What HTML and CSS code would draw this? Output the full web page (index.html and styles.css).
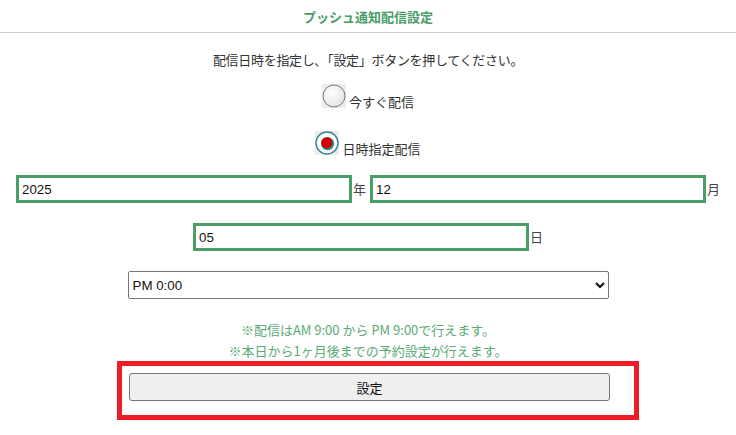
FILE: index.html
```html
<!DOCTYPE html>
<html lang="ja">
<head>
<meta charset="utf-8">
<title>プッシュ通知配信設定</title>
<link rel="stylesheet" href="styles.css">
</head>
<body>
<header class="header"><h1 class="title">プッシュ通知配信設定</h1></header>
<main class="form">
  <p class="instr">配信日時を指定し､「設定」ボタンを押してください。</p>
  <label class="radio-row r1">
    <svg class="radio" width="24" height="24" viewBox="0 0 24 24">
      <defs><radialGradient id="g1" cx="40%" cy="35%" r="70%"><stop offset="0" stop-color="#ffffff"/><stop offset="1" stop-color="#e2e2e2"/></radialGradient></defs>
      <rect width="24" height="24" fill="#ececec"/>
      <circle cx="12" cy="12" r="11" fill="url(#g1)" stroke="#7a7a7a" stroke-width="1"/>
    </svg>
    <span class="rlabel">今すぐ配信</span>
  </label>
  <label class="radio-row r2">
    <svg class="radio" width="24" height="24" viewBox="0 0 24 24">
      <rect width="24" height="24" fill="#ececec"/>
      <circle cx="12" cy="12" r="11" fill="#ffffff" stroke="#2f8595" stroke-width="1.4"/>
      <circle cx="12.6" cy="12.6" r="6.6" fill="#2a8a98"/>
      <circle cx="11.8" cy="11.8" r="5.6" fill="#d40000"/>
    </svg>
    <span class="rlabel">日時指定配信</span>
  </label>
  <div class="date-row">
    <span class="field"><input class="tin" type="text" value="2025"><span class="unit">年</span></span>
    <span class="field"><input class="tin" type="text" value="12"><span class="unit">月</span></span>
  </div>
  <div class="date-row day">
    <span class="field"><input class="tin" type="text" value="05"><span class="unit">日</span></span>
  </div>
  <div class="sel-row">
    <select class="sel"><option>PM 0:00</option></select>
  </div>
  <div class="notes">
    <p class="note">※配信はAM 9:00 から PM 9:00で行えます。</p>
    <p class="note">※本日から1ヶ月後までの予約設定が行えます。</p>
  </div>
  <div class="highlight">
    <button class="btn" type="button">設定</button>
  </div>
</main>
</body>
</html>
```
FILE: styles.css
```css
html, body {
  margin: 0;
  padding: 0;
  background: #ffffff;
}
body {
  font-family: "Noto Sans CJK JP", "Noto Sans", sans-serif;
  color: #333333;
  font-size: 13px;
}
.header {
  height: 32px;
  border-bottom: 1px solid #cccccc;
  display: flex;
  align-items: center;
  justify-content: center;
}
.title {
  margin: 0;
  font-size: 13px;
  font-weight: bold;
  color: #4a9c68;
  line-height: 1;
}
.form {
  display: flex;
  flex-direction: column;
  align-items: center;
}
.instr {
  margin: 17px 0 0;
  height: 20px;
  line-height: 20px;
  color: #333333;
  letter-spacing: -0.3px;
}
.radio-row {
  display: flex;
  align-items: flex-end;
  gap: 3px;
  height: 24px;
}
.r1 { margin-top: 14px; }
.r2 { margin-top: 23px; }
.radio { display: block; flex: none; }
.rlabel {
  line-height: 15px;
  margin-bottom: -1px;
  color: #333333;
}
.date-row {
  display: flex;
  justify-content: center;
  gap: 4px;
  margin-top: 20px;
  height: 28px;
}
.day { margin-top: 20px; }
.field {
  display: flex;
  align-items: center;
  gap: 1px;
}
.tin {
  box-sizing: border-box;
  width: 336px;
  height: 28px;
  border: 3px solid #4a9e6a;
  border-radius: 0;
  padding: 0 3px;
  margin: 0;
  font-family: "Liberation Sans", Arial, sans-serif;
  font-size: 13.333px;
  color: #111111;
  outline: none;
}
.unit {
  font-size: 13px;
  color: #444444;
  line-height: 28px;
}
.sel-row {
  margin-top: 20px;
  display: flex;
  justify-content: center;
}
.sel {
  box-sizing: border-box;
  width: 481px;
  height: 28px;
  border: 1px solid #767676;
  border-radius: 2px;
  background: #ffffff;
  font-family: "Liberation Sans", Arial, sans-serif;
  font-size: 13.333px;
  color: #111111;
  margin: 0;
}
.notes {
  margin-top: 20px;
  display: flex;
  flex-direction: column;
  align-items: center;
}
.note {
  margin: 0;
  line-height: 21px;
  color: #5aab76;
  font-size: 13px;
}
.highlight {
  align-self: flex-start;
  margin-left: 117px;
  box-sizing: border-box;
  width: 522px;
  border: 5px solid #ee1c25;
  padding: 7px 0 14px 7px;
}
.btn {
  box-sizing: border-box;
  display: block;
  width: 481px;
  height: 28px;
  border: 1px solid #767676;
  border-radius: 3px;
  background: #efefef;
  font-family: "Noto Sans CJK JP", sans-serif;
  font-size: 13px;
  color: #111111;
  padding: 0;
  margin: 0;
}
```
